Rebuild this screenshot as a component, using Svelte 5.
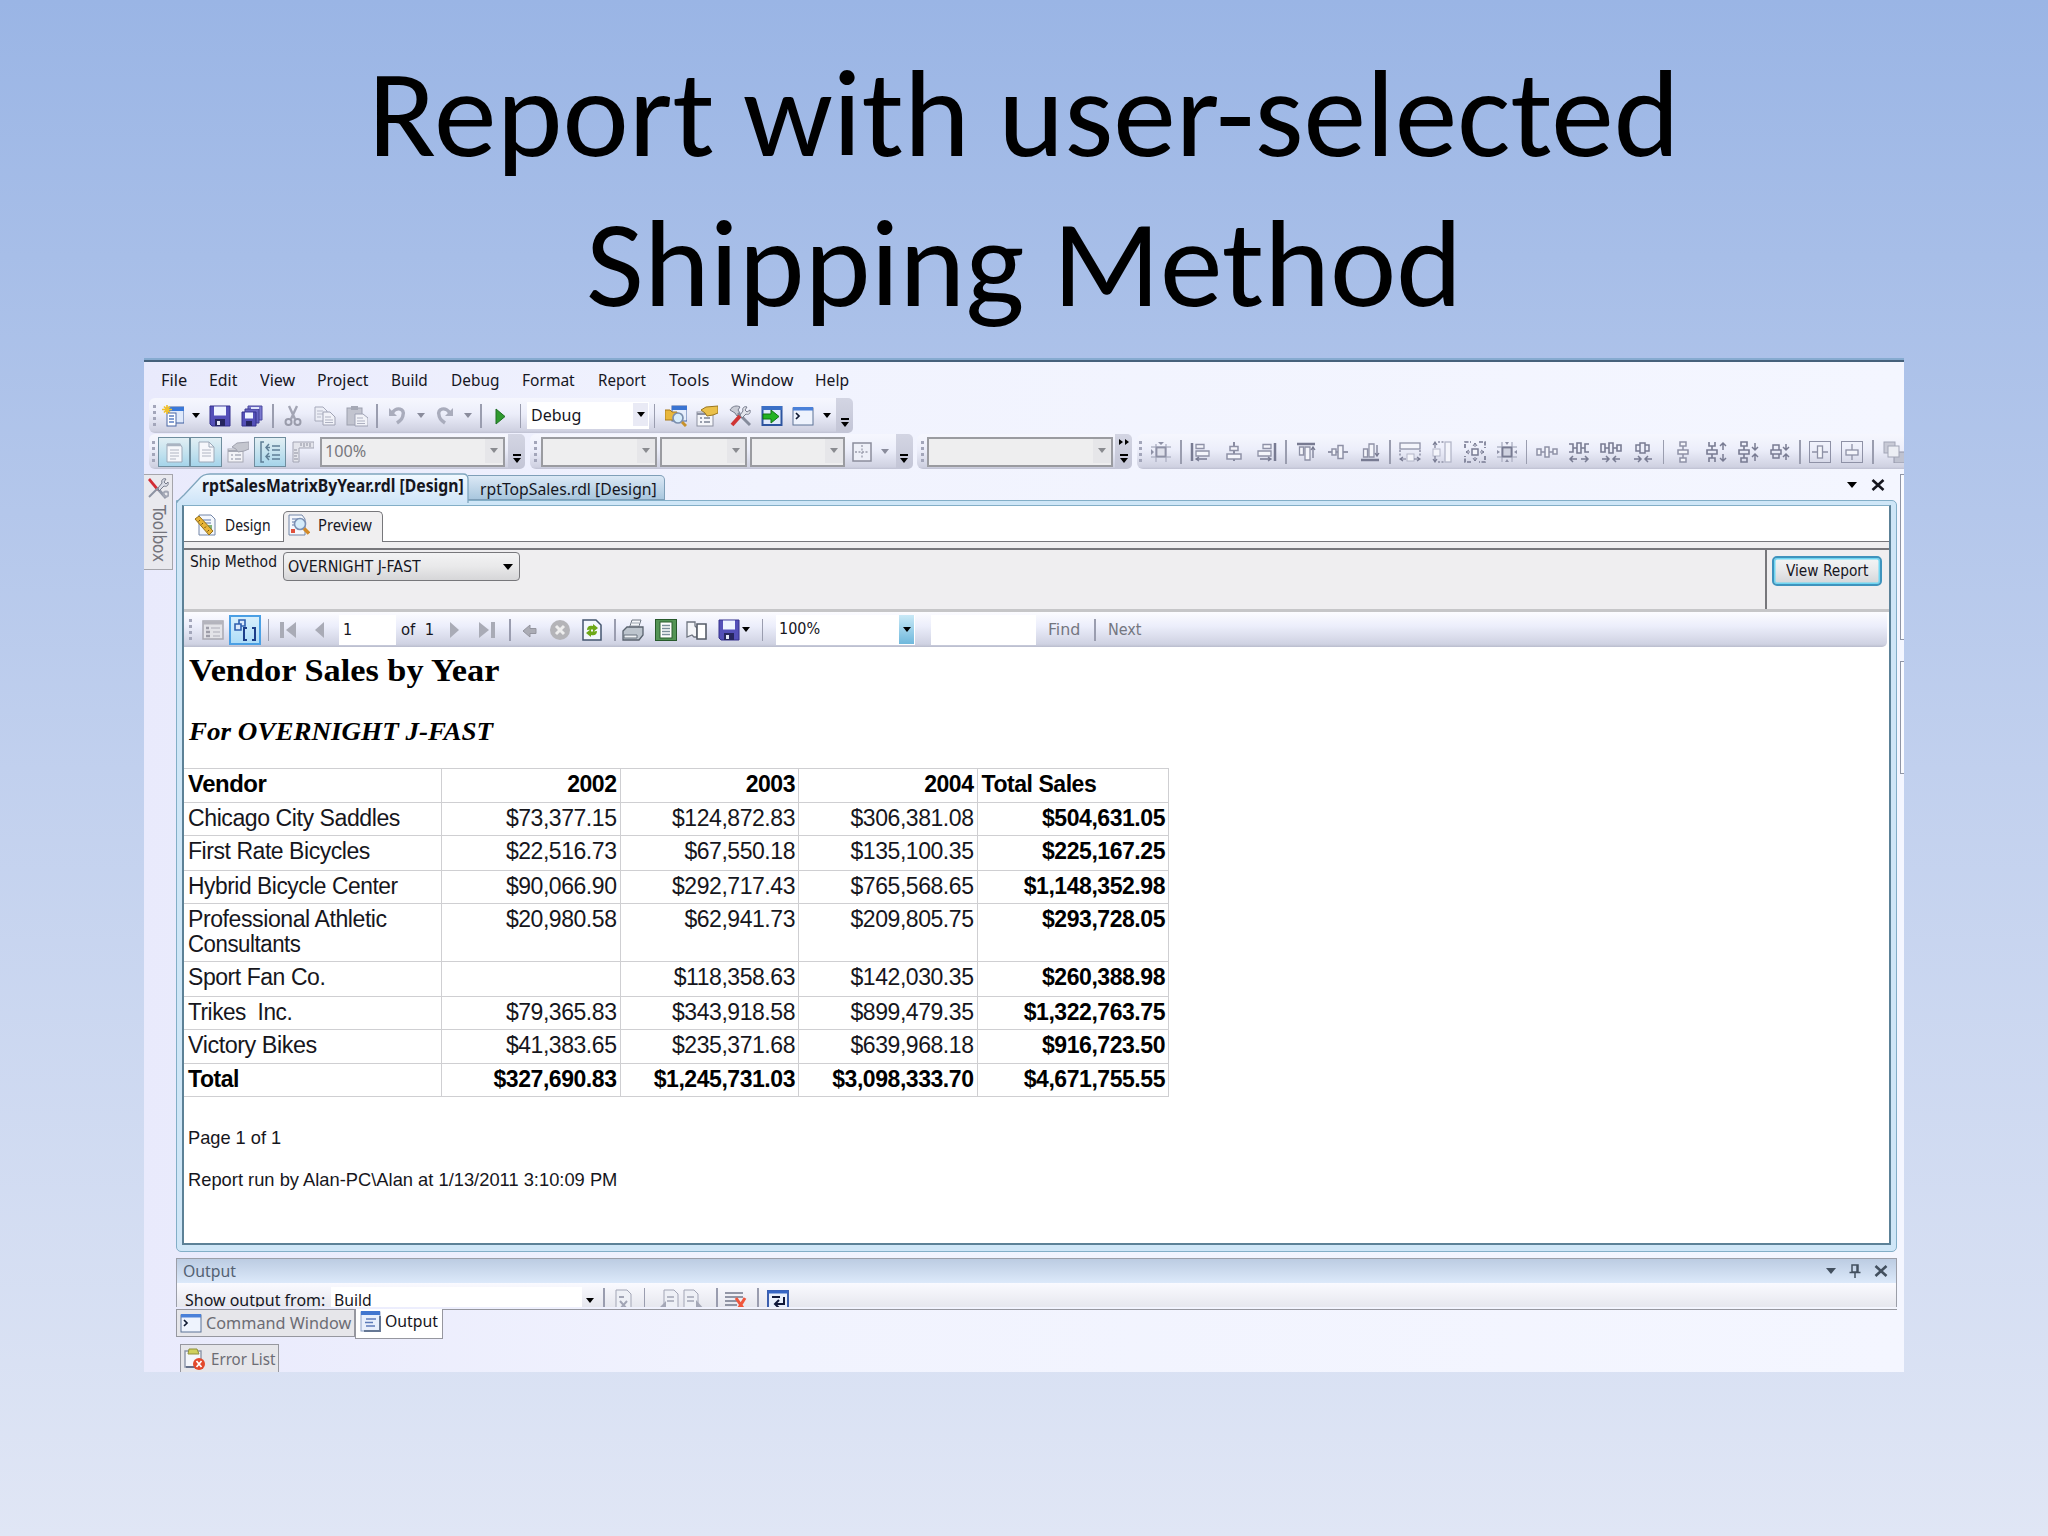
<script lang="ts">
  type Item = { kind: string; w: number; name?: string; text?: string; tw?: number; tone?: string };

  const g = '#8e91a6';
  const l = '#b3b6c8';

  const icons: Record<string, string> = {
    project: `<rect x="7" y="2" width="15" height="16" fill="#dfe9fb" stroke="#3f5f9f"/><rect x="7" y="2" width="15" height="4" fill="#3a78d8"/><rect x="5" y="8" width="9" height="13" fill="#fff" stroke="#4a66a4"/><path d="M7 11h5M7 14h5M7 17h5" stroke="#5b7fc4" stroke-width="1.4"/><path d="M5 0v9M0 4.5h10M2 1.5l6 6M8 1.5l-6 6" stroke="#f0c02c" stroke-width="1.7"/>`,
    save: `<path d="M1 1h20v20H3l-2-2z" fill="#5450b8" stroke="#34318c"/><rect x="5" y="1.5" width="12" height="9" fill="#eef3ff"/><rect x="6" y="14" width="10" height="7" fill="#26265e"/><rect x="8" y="16" width="3" height="4" fill="#e4e8f8"/>`,
    saveAll: `<path d="M7 1h14v14H7z" fill="#7a78cf" stroke="#4b489f"/><path d="M4 4h14v14H4z" fill="#6562c2" stroke="#413e94"/><path d="M1 7h14v14H1z" fill="#5450b8" stroke="#34318c"/><rect x="4" y="7.5" width="8" height="6" fill="#eef3ff"/><rect x="5" y="16" width="6" height="5" fill="#26265e"/><rect x="10" y="2" width="8" height="2" fill="#dfe3fb"/>`,
    cut: `<path d="M7 1l6 13M15 1l-6 13" stroke="#a3a5b4" stroke-width="2.4" fill="none"/><circle cx="6.5" cy="17" r="3" stroke="#9a9cab" stroke-width="2" fill="none"/><circle cx="15.5" cy="17" r="3" stroke="#9a9cab" stroke-width="2" fill="none"/>`,
    copy: `<path d="M1 2h8l4 4v10H1z" fill="#eceef6" stroke="#a6a9ba"/><path d="M3 6h6M3 9h6M3 12h4" stroke="#b6b9c8"/><path d="M9 7h7l5 5v8H9z" fill="#f1f2f8" stroke="#9fa2b4"/><path d="M11 12h6M11 15h8M11 17.5h8" stroke="#aeb1c1"/>`,
    paste: `<rect x="1" y="3" width="15" height="17" fill="#c2c4cf" stroke="#9c9fae"/><rect x="5" y="1" width="7" height="4" fill="#a5a8b5"/><path d="M9 9h8l5 4v8H9z" fill="#f1f2f8" stroke="#9fa2b4"/><path d="M11 13h6M11 16h8M11 18.5h8" stroke="#aeb1c1"/>`,
    undo: `<path d="M3 3v8h8z" fill="#a9acbc"/><path d="M6 8c5-7 13-4 11 2 0 4-3 6-6 8" fill="none" stroke="#a9acbc" stroke-width="3.4"/>`,
    redo: `<path d="M19 3v8h-8z" fill="#a9acbc"/><path d="M16 8C11 1 3 4 5 10c0 4 3 6 6 8" fill="none" stroke="#a9acbc" stroke-width="3.4"/>`,
    play: `<path d="M7 4l9 7.5L7 19z" fill="#2f9a2f" stroke="#1d6f22"/>`,
    explorer: `<rect x="7" y="1" width="15" height="15" fill="#e6eefc" stroke="#44639f"/><rect x="7" y="1" width="15" height="4" fill="#3a74d2"/><path d="M0 5h5l2 2h5v8H0z" fill="#e8b73c" stroke="#a97a1a"/><circle cx="13" cy="13" r="5" fill="#d6ecfb" stroke="#7b8fae" stroke-width="1.7"/><path d="M17 17l4 4" stroke="#c7912a" stroke-width="3"/>`,
    props: `<rect x="1" y="7" width="16" height="14" fill="#f5f6fa" stroke="#8c90a0"/><path d="M1 9h16" stroke="#8c90a0" stroke-width="2"/><path d="M4 13h2M8 13h6M4 17h2M8 17h6" stroke="#7b8294" stroke-width="1.6"/><path d="M5 5l5-3 12-1v7l-5 2-6 1-2-3z" fill="#eac04a" stroke="#9a761e"/>`,
    propsGray: `<rect x="1" y="8" width="15" height="13" fill="#f2f2f6" stroke="#a6a8b4"/><path d="M1 10h15" stroke="#a6a8b4" stroke-width="2"/><path d="M4 14h2M8 14h6M4 18h2M8 18h6" stroke="#abadba" stroke-width="1.5"/><path d="M5 6l5-4 12-1v7l-5 2-6 1-2-3z" fill="#c4c6cf" stroke="#a0a2af"/>`,
    tools: `<path d="M1 5c2-4 7-5 10-3l-2 3 2 3-3 3-2-3z" fill="#c9ccd6" stroke="#777c8c"/><path d="M9 8l12 12" stroke="#858b9b" stroke-width="3"/><path d="M11 11l-8 9" stroke="#cf3434" stroke-width="3.8"/><path d="M11 10l3-4c-1-3 1-5 4-4l-2 3 2 2 3-2c1 4-2 5-4 4l-4 4z" fill="#e3e5ec" stroke="#777c8c"/>`,
    toolsBox: `<path d="M1 3l2-2 9 11-2 2z" fill="#d22c34"/><path d="M11 12l8 9" stroke="#9298a8" stroke-width="3"/><path d="M11 11l-9 9" stroke="#8d93a2" stroke-width="2"/><path d="M11 11l4-5c-1-3 1-5 4-4l-2 3 2 2 2-2c1 4-2 5-4 4l-5 5z" fill="#d9dce6" stroke="#777c8c"/><circle cx="19" cy="17" r="2.5" fill="none" stroke="#a4a8b6" stroke-width="2"/>`,
    start: `<rect x="1.5" y="2" width="19" height="18" fill="#dfeafc" stroke="#2d549f" stroke-width="2"/><rect x="1" y="1" width="20" height="4" fill="#3a6fc6"/><path d="M2 9h8V5l8 6.5L10 18v-4H2z" fill="#22b322" stroke="#117215"/>`,
    command: `<rect x="1" y="3" width="20" height="17" fill="#eef3fd" stroke="#5c7396"/><rect x="1" y="2" width="20" height="3.5" fill="#4a80d8"/><path d="M4 8l3 3-3 3" fill="none" stroke="#101a33" stroke-width="1.7"/>`,
    page: `<path d="M4 3h13l2 3v15H4z" fill="#f6f7fb" stroke="#9da9b8"/><path d="M4 4h14" stroke="#aab4c2" stroke-width="2.5"/><path d="M7 9h9M7 12h9M7 15h9M7 18h6" stroke="#b0b5c2"/>`,
    page2: `<path d="M4 1h10l5 5v15H4z" fill="#f6f7fb" stroke="#9da9b8"/><path d="M14 1v5h5" fill="none" stroke="#9da9b8"/><path d="M7 9h9M7 12h9M7 15h9" stroke="#b0b5c2"/>`,
    group: `<path d="M5 1H2v20h3M10 3L7 6.500l3 3.500M10 12l-3 3.500L10 19" fill="none" stroke="#5f7f96" stroke-width="1.5"/><path d="M7 6.5h4M13 5h8M13 9h8M7 15.5h4M13 14h8M13 18h8" stroke="#5f7f96" stroke-width="1.5"/>`,
    ruler: `<path d="M1 1h21v6H7v14H1z" fill="#e4e5ec" stroke="#a3a5b4"/><path d="M9 2v3M12 2v4M15 2v3M18 2v4M2 9h3M2 12h4M2 15h3M2 18h4" stroke="#8d8f9e"/>`,
    borders: `<rect x="2" y="2" width="18" height="18" fill="#eef0f8" stroke="#8b8d9c" stroke-width="1.5"/><path d="M11 4v14M4 11h14" stroke="#9a9cab" stroke-width="1.3" stroke-dasharray="2 1.5"/>`,
    snap: `<path d="M6 3v18M16 3v18M1 6h20M1 16h20" stroke="${l}" stroke-width="1.5"/><rect x="6.5" y="6.5" width="9" height="9" fill="#dfe1ec" stroke="${g}" stroke-width="1.8"/><path d="M8 1h6l-3 3zM1 8v6l3-3z" fill="${g}"/>`,
    alignL: `<path d="M2 2v18" stroke="#787b92" stroke-width="2.5"/><path d="M6 3.5h8v4H6zM6 10h13v5H6z" fill="#f4f5fb" stroke="${g}" stroke-width="1.3"/><path d="M6 18h11M9 16l-3 2 3 2" stroke="#787b92" stroke-width="1.3" fill="none"/>`,
    alignC: `<path d="M11 1v19" stroke="#787b92" stroke-width="1.7"/><path d="M7 5.5h8v4H7zM4 13h14v5H4z" fill="#f4f5fb" stroke="${g}" stroke-width="1.5"/>`,
    alignR: `<path d="M20 2v18" stroke="#787b92" stroke-width="2.5"/><path d="M8 3.5h8v4H8zM3 10h13v5H3z" fill="#f4f5fb" stroke="${g}" stroke-width="1.3"/><path d="M5 18h11M13 16l3 2-3 2" stroke="#787b92" stroke-width="1.3" fill="none"/>`,
    alignT: `<path d="M2 3h18" stroke="#787b92" stroke-width="2.5"/><path d="M4.5 6v8h4V6zM10 6v13h5V6z" fill="#f4f5fb" stroke="${g}" stroke-width="1.3"/><path d="M18 17V6M16 9l2-3 2 3" stroke="#787b92" stroke-width="1.3" fill="none"/>`,
    alignM: `<path d="M1 11h20" stroke="#787b92" stroke-width="1.7"/><path d="M5 8h4v6H5zM11 4.5h5v13h-5z" fill="#f4f5fb" stroke="${g}" stroke-width="1.5"/>`,
    alignB: `<path d="M2 19h18" stroke="#787b92" stroke-width="2.5"/><path d="M4.5 8v8h4V8zM10 3v13h5V3z" fill="#f4f5fb" stroke="${g}" stroke-width="1.3"/><path d="M18 4v11M16 12l2 3 2-3" stroke="#787b92" stroke-width="1.3" fill="none"/>`,
    sameW: `<rect x="1" y="2" width="20" height="6" fill="#f4f5fb" stroke="${g}" stroke-width="1.3"/><path d="M1 9v6M21 9v6" stroke="${g}" stroke-dasharray="2 1.5" stroke-width="1.5"/><rect x="8" y="13" width="7" height="7" fill="#f4f5fb" stroke="${l}"/><path d="M1 18h6M4 16l-3 2 3 2M15 18h6M18 16l3 2-3 2" stroke="#787b92" stroke-width="1.2" fill="none"/>`,
    sameH: `<rect x="14" y="1" width="6" height="20" fill="#f4f5fb" stroke="${l}" stroke-width="1.3"/><path d="M7 1h6M7 21h6" stroke="${g}" stroke-dasharray="2 1.5" stroke-width="1.5"/><rect x="2" y="8" width="7" height="7" fill="#f4f5fb" stroke="${l}"/><path d="M4 1v6M2 4l2-3 2 3M4 15v6M2 18l2 3 2-3" stroke="#787b92" stroke-width="1.2" fill="none"/>`,
    sameWH: `<path d="M1 7V1h6M15 1h6v6M21 15v6h-6M7 21H1v-6" stroke="#787b92" stroke-width="1.7" fill="none" stroke-dasharray="4 1.5"/><rect x="8" y="8" width="6" height="6" fill="#f4f5fb" stroke="#787b92" stroke-width="1.5"/><path d="M11 2v4M9 5l2-3 2 3M11 16v4M9 17l2 3 2-3M2 11h4M5 9l-3 2 3 2M16 11h4M17 9l3 2-3 2" stroke="#787b92" fill="none"/>`,
    grid: `<path d="M6 1v20M16 1v20M1 6h20M1 16h20" stroke="${l}" stroke-width="1.5"/><rect x="6.5" y="6.5" width="9" height="9" fill="#cfd2e0" stroke="#787b92" stroke-width="1.8"/><path d="M9 1h4l-2 3zM9 21h4l-2-3zM1 9v4l3-2zM21 9v4l-3-2z" fill="${g}"/>`,
    hEq: `<path d="M1 8h4v6H1zM9 6h4v10H9zM17 8h4v5h-4zM5 11h4M13 11h4" fill="#f4f5fb" stroke="${g}" stroke-width="1.5"/>`,
    hInc: `<path d="M1 3h4v8H1M21 3h-4v8h4M9 2h4v10H9zM5 7h4M13 7h4" fill="none" stroke="#787b92" stroke-width="1.6"/><path d="M2 18h7M5 15l-3 3 3 3M13 18h7M17 15l3 3-3 3" fill="none" stroke="#787b92" stroke-width="1.5"/>`,
    hDec: `<path d="M1 3h4v8H1zM9 2h4v10H9zM17 4h4v6h-4zM5 7h4M13 7h4" fill="none" stroke="#787b92" stroke-width="1.6"/><path d="M2 18h7M6 15l3 3-3 3M13 18h7M16 15l-3 3 3 3" fill="none" stroke="#787b92" stroke-width="1.5"/>`,
    hRem: `<path d="M4 4h4v6H4zM8 2h5v10H8zM13 4h4v6h-4z" fill="none" stroke="#787b92" stroke-width="1.5"/><path d="M2 18h7M6 15l3 3-3 3M13 18h7M16 15l-3 3 3 3" fill="none" stroke="#787b92" stroke-width="1.5"/>`,
    vEq: `<path d="M8 1h6v4H8zM6 9h10v4H6zM8 17h6v4H8zM11 5v4M11 13v4" fill="#f4f5fb" stroke="${g}" stroke-width="1.5"/>`,
    vInc: `<path d="M4 1v4h6V1M4 21v-4h6v4M2 9h10v4H2zM7 5v4M7 13v4" fill="none" stroke="#787b92" stroke-width="1.6"/><path d="M18 2v7M15 5l3-3 3 3M18 13v7M15 17l3 3 3-3" fill="none" stroke="#787b92" stroke-width="1.5"/>`,
    vDec: `<path d="M4 1h6v4H4zM2 9h10v4H2zM4 17h6v4H4zM7 5v4M7 13v4" fill="none" stroke="#787b92" stroke-width="1.6"/><path d="M18 2v7M15 6l3 3 3-3M18 13v7M15 16l3-3 3 3" fill="none" stroke="#787b92" stroke-width="1.5"/>`,
    vRem: `<path d="M4 4h6v5H4zM2 9h10v4H2zM4 13h6v4H4z" fill="none" stroke="#787b92" stroke-width="1.5"/><path d="M17 3v6M14 6l3 3 3-3M17 13v6M14 16l3-3 3 3" fill="none" stroke="#787b92" stroke-width="1.5"/>`,
    cenH: `<rect x="0.5" y="0.5" width="21" height="21" fill="none" stroke="${g}"/><path d="M3 11h16" stroke="${g}" stroke-width="1.3"/><rect x="8.5" y="5" width="5" height="12" fill="#f4f5fb" stroke="${g}" stroke-width="1.3"/>`,
    cenV: `<rect x="0.5" y="0.5" width="21" height="21" fill="none" stroke="${g}"/><path d="M11 3v16" stroke="${g}" stroke-width="1.3"/><rect x="5" y="9" width="12" height="5" fill="#f4f5fb" stroke="${g}" stroke-width="1.3"/>`,
    front: `<rect x="1" y="1" width="11" height="11" fill="#c8cad6" stroke="#a2a5b6"/><rect x="11" y="11" width="11" height="11" fill="#bfc2d0" stroke="#9396aa"/><rect x="5" y="5" width="11" height="11" fill="#eceef4" stroke="#a2a5b6"/>`,
    design: `<path d="M5 1h12l4 4v16H5z" fill="#f4f7fc" stroke="#7386a8"/><path d="M9 6h8M9 9h8" stroke="#90a3c4" stroke-width="1.5"/><rect x="14" y="11" width="4" height="5" fill="#7fb27c"/><path d="M1 5l4-3 14 15-4 4z" fill="#e8b438" stroke="#96701a"/><path d="M6 6l-1.5 1.5M9 9l-1.5 1.5M12 12.5L10.5 14M15 16l-1.5 1.5" stroke="#6e500d"/>`,
    preview: `<path d="M1 1h13l3 4v16H1z" fill="#f4f7fc" stroke="#7386a8"/><path d="M4 5h9M4 8h4M4 11h3" stroke="#90a3c4" stroke-width="1.5"/><rect x="3" y="15" width="4" height="4" fill="#e0503c"/><circle cx="12" cy="10" r="5.5" fill="#d5ecfa" stroke="#7b90b4" stroke-width="1.6"/><path d="M16 14.5l5 5" stroke="#d28a28" stroke-width="3.5"/>`,
    map: `<rect x="1" y="2" width="20" height="18" fill="#e3e3e8" stroke="#a9a9b2" stroke-width="1.5"/><path d="M1 4h20" stroke="#b4b4bd" stroke-width="3"/><path d="M4 9h3M4 13h4M4 17h4" stroke="#9d9da8" stroke-width="2.5"/><path d="M9 9h9M11 13h7M11 17h7" stroke="#c0c0c8" stroke-width="1.5"/>`,
    params: `<path d="M5 1h6v6H5z" fill="#dbe9fb" stroke="#2f5fae" stroke-width="1.6"/><path d="M1 5h6v6H1z" fill="#dbe9fb" stroke="#2f5fae" stroke-width="1.6"/><path d="M13 9h-3v12h3M18 9h3v12h-3" fill="none" stroke="#1c3f8a" stroke-width="2"/>`,
    first: `<path d="M4 3v16" stroke="#a9abb6" stroke-width="4"/><path d="M18 3L8 11l10 8z" fill="#a9abb6"/>`,
    prev: `<path d="M15 3L6 11l9 8z" fill="#a9abb6"/>`,
    next: `<path d="M7 3l9 8-9 8z" fill="#a9abb6"/>`,
    last: `<path d="M18 3v16" stroke="#a9abb6" stroke-width="4"/><path d="M4 3l10 8-10 8z" fill="#a9abb6"/>`,
    back: `<path d="M5 12l7-6v3.5h6v5h-6V18z" fill="#abacb5" stroke="#94959f"/>`,
    stop: `<circle cx="11" cy="11" r="10" fill="#b4b4b8"/><path d="M7 7l8 8M15 7l-8 8" stroke="#eee" stroke-width="3"/>`,
    refresh: `<path d="M2 1h13l5 5v15H2z" fill="#f3f7fd" stroke="#44566f" stroke-width="1.5"/><path d="M6 11c0-4 3-5 6-4V5l5 4-5 4v-2.500c-2 0-3 0-6 .5zM16 12c0 4-3 5-6 4v2l-5-4 5-4v2.500c2 0 3 0 6-.5z" fill="#6da817"/>`,
    print: `<path d="M7 10L10 1h9l-3 9z" fill="#f4f6f9" stroke="#6e7783"/><path d="M10 4h7M9 7h7" stroke="#9ca5b0"/><path d="M1 12l4-4h16v8l-4 5H1z" fill="#bcc4cd" stroke="#59626e" stroke-width="1.3"/><path d="M2 16h13v3H2z" fill="#eef1f4" stroke="#69727e"/>`,
    layout: `<rect x="0.5" y="0.5" width="21" height="21" fill="#539455" stroke="#27592b"/><rect x="5" y="3" width="12" height="16" fill="#fff" stroke="#2c5f31"/><path d="M7 6.5h8M7 9.5h8M7 12.5h8M7 15.5h8" stroke="#7b8f9b" stroke-width="1.4"/>`,
    setup: `<path d="M1 3h8v4l2 2v9H8l-2-2-5 2z" fill="#f4f5f9" stroke="#6e7480" stroke-width="1.3"/><path d="M11 5h9v15h-9z" fill="#fff" stroke="#565c68" stroke-width="1.6"/>`,
    outFind: `<path d="M3 1h11l4 4v17H3z" fill="#eef0f6" stroke="#a2a5b5"/><path d="M6 8h5M7 12l7 8M14 12l-7 8" stroke="#a2a5b5" stroke-width="2"/>`,
    outPrev: `<path d="M7 1h10l4 4v14H7z" fill="#eef0f6" stroke="#a2a5b5"/><path d="M10 8h7M10 12h7" stroke="#a2a5b5" stroke-width="1.5"/><path d="M0 21l9-9v9z" fill="#a5a8b7"/>`,
    outNext: `<path d="M1 1h10l4 4v14H1z" fill="#eef0f6" stroke="#a2a5b5"/><path d="M4 8h7M4 12h7" stroke="#a2a5b5" stroke-width="1.5"/><path d="M22 21l-9-10v10z" fill="#a5a8b7"/>`,
    outClear: `<path d="M0 4h18M0 8h18M0 12h14M0 16h12M0 20h12" stroke="#73788a" stroke-width="1.7"/><path d="M11 9l9 13M20 9l-8 13" stroke="#f0563c" stroke-width="3"/>`,
    wrap: `<rect x="1" y="2" width="20" height="21" fill="#e8effc" stroke="#3c5fae" stroke-width="2"/><path d="M1 3h20" stroke="#3565c4" stroke-width="3"/><path d="M5 8h8M17 8v7H9M12 11l-4 4 4 4" fill="none" stroke="#10183a" stroke-width="2"/>`,
    output: `<rect x="1" y="2" width="19" height="19" fill="#e8effc" stroke="#8ba0c6"/><rect x="1" y="1" width="19" height="4" fill="#4176cf"/><path d="M6 9h10M5 12.5h8M6 16h9" stroke="#5c7bb9" stroke-width="1.7"/><path d="M20 6v15H4" fill="none" stroke="#657794" stroke-width="2"/>`,
    error: `<path d="M1 3h16v16H1z" fill="#f4f6fb" stroke="#8c95a8" stroke-width="1.4"/><path d="M5 1h8l2 5H4z" fill="#d0d05c" stroke="#8f913c"/><path d="M2 19h9" stroke="#66718a" stroke-width="2"/><circle cx="15" cy="16" r="6" fill="#e2492c"/><path d="M12.5 13l5 6M17.5 13l-5 6" stroke="#fff" stroke-width="1.7"/>`
  };

  const menu = [
    ['File', 26, 22],
    ['Edit', 28, 23],
    ['View', 35, 22],
    ['Project', 52, 22],
    ['Build', 37, 23],
    ['Debug', 48, 23],
    ['Format', 53, 23],
    ['Report', 48, 23],
    ['Tools', 40, 22],
    ['Window', 62, 22],
    ['Help', 34, 0]
  ] as [string, number, number][];

  const ic = (name: string, w: number): Item => ({ kind: 'glyph', name, w });
  const pressed = (name: string, w: number, tone = ''): Item => ({ kind: 'pressed', name, w, tone });
  const sep = (w: number): Item => ({ kind: 'sep', w });
  const caret = (w: number, tone = ''): Item => ({ kind: 'caret', w, tone });
  const gap = (w: number): Item => ({ kind: 'gap', w });
  const grip = (w: number): Item => ({ kind: 'grip', w });
  const label = (text: string, tw: number, w: number, tone = ''): Item => ({ kind: 'label', text, tw, w, tone });
  const combo = (w: number, text = '', tw = 0, tone = ''): Item => ({ kind: 'combo', w, text, tw, tone });

  const standardBar: Item[] = [
    grip(10), ic('project', 28), caret(18), ic('save', 30), ic('saveAll', 34), sep(8),
    ic('cut', 31), ic('copy', 33), ic('paste', 32), sep(8),
    ic('undo', 32), caret(16, 'dim'), ic('redo', 31), caret(16, 'dim'), sep(10),
    ic('play', 28), sep(13), combo(122, 'Debug', 50, 'light'), sep(11),
    ic('explorer', 31), ic('props', 32), ic('tools', 33), ic('start', 32), ic('command', 30), caret(18)
  ];

  const layoutBars: { items: Item[]; more: string }[] = [
    {
      items: [grip(9), pressed('page', 32), pressed('page2', 32), ic('propsGray', 32), pressed('group', 32), ic('ruler', 34), combo(185, '100%', 41), gap(3)],
      more: 'one'
    },
    {
      items: [grip(11), combo(116), gap(3), combo(87.5), gap(3), combo(94.5), ic('borders', 34), caret(12, 'dim'), gap(5)],
      more: 'one'
    },
    { items: [grip(10), combo(186), gap(2)], more: 'two' }
  ];

  const s = 32.3;
  const alignBar: Item[] = [
    grip(8), ic('snap', s), sep(8.5),
    ic('alignL', s), ic('alignC', s), ic('alignR', s), sep(7.2),
    ic('alignT', s), ic('alignM', s), ic('alignB', s), sep(7.5),
    ic('sameW', s), ic('sameH', s), ic('sameWH', s), ic('grid', s), sep(7.5),
    ic('hEq', s), ic('hInc', s), ic('hDec', s), ic('hRem', s), sep(7.5),
    ic('vEq', s), ic('vInc', s), ic('vDec', s), ic('vRem', s), sep(7.5),
    ic('cenH', s), ic('cenV', s), sep(9), ic('front', s)
  ];

  const reportBar: Item[] = [
    grip(12), ic('map', 33), pressed('params', 32, 'bright'), sep(15),
    ic('first', 25), ic('prev', 38), { kind: 'field', w: 57, text: '1', tw: 9 },
    label('of  1', 33, 43), ic('next', 29), ic('last', 36), sep(12),
    ic('back', 25), ic('stop', 38), ic('refresh', 26), sep(20),
    ic('print', 16), gap(8), ic('layout', 33), ic('setup', 30), ic('save', 33), caret(1), gap(3), sep(27),
    combo(139, '100%', 41, 'zoom'), gap(16), { kind: 'field', w: 105 },
    gap(6), label('Find', 32, 43, 'dim'), sep(20), label('Next', 34, 40, 'dim')
  ];

  const outputBar: Item[] = [
    gap(1), label('Show output from:', 140, 153), combo(268, 'Build', 38, 'flat'), sep(10),
    ic('outFind', 30), sep(11), ic('outPrev', 36), ic('outNext', 16), sep(30),
    ic('outClear', 8), sep(36), ic('wrap', 3)
  ];

  const years = ['2002', '2003', '2004'];
  const rows = [
    { name: ['Chicago City Saddles'], nw: [212], h: 33.5, v: ['$73,377.15', '$124,872.83', '$306,381.08'], total: '$504,631.05' },
    { name: ['First Rate Bicycles'], nw: [182], h: 35, v: ['$22,516.73', '$67,550.18', '$135,100.35'], total: '$225,167.25' },
    { name: ['Hybrid Bicycle Center'], nw: [210], h: 33.4, v: ['$90,066.90', '$292,717.43', '$765,568.65'], total: '$1,148,352.98' },
    { name: ['Professional Athletic', 'Consultants'], nw: [199, 113], h: 57.3, v: ['$20,980.58', '$62,941.73', '$209,805.75'], total: '$293,728.05' },
    { name: ['Sport Fan Co.'], nw: [137], h: 35, v: ['', '$118,358.63', '$142,030.35'], total: '$260,388.98' },
    { name: ['Trikes  Inc.'], nw: [104], h: 33.4, v: ['$79,365.83', '$343,918.58', '$899,479.35'], total: '$1,322,763.75' },
    { name: ['Victory Bikes'], nw: [129], h: 33.6, v: ['$41,383.65', '$235,371.68', '$639,968.18'], total: '$916,723.50' }
  ];
  const totals = ['$327,690.83', '$1,245,731.03', '$3,098,333.70', '$4,671,755.55'];

  // squeeze or stretch a run of text to an exact advance width
  function fit(node: HTMLElement, width: number) {
    node.style.transform = `scaleX(${width / node.offsetWidth})`;
  }
</script>

{#snippet icon(name: string)}
  <svg class="icon" viewBox="0 0 22 22" fill="none">{@html icons[name]}</svg>
{/snippet}

{#snippet fitted(text: string, width: number)}
  <span class="fit" style={`width: ${width}px`}><span class="fit-text" use:fit={width}>{text}</span></span>
{/snippet}

{#snippet closeMark()}
  <svg class="close" viewBox="0 0 14 12"><path d="M1.5 1l11 10M12.5 1l-11 10" stroke="currentColor" stroke-width="2.6" /></svg>
{/snippet}

{#snippet bar(items: Item[])}
  {#each items as item}
    <div class={`item ${item.kind} ${item.tone ?? ''}`} style={`width: ${item.w}px`}>
      {#if item.name}
        {@render icon(item.name)}
      {:else if item.kind === 'grip'}
        <i></i><i></i><i></i><i></i>
      {:else if item.kind === 'sep'}
        <i></i>
      {:else if item.kind === 'caret'}
        <i class="arrow"></i>
      {:else if item.kind === 'combo'}
        {#if item.text}{@render fitted(item.text, item.tw ?? 0)}{/if}
        <span class="drop"><i class="arrow"></i></span>
      {:else if item.text}
        {@render fitted(item.text, item.tw ?? 0)}
      {/if}
    </div>
  {/each}
{/snippet}

{#snippet overflow(kind: string)}
  <div class={`more ${kind}`}>
    {#if kind === 'two'}
      <svg class="chevrons" viewBox="0 0 12 6"><path d="M1 0l4 3-4 3zM7 0l4 3-4 3z" fill="#000" /></svg>
    {/if}
    <b></b><i class="arrow"></i>
  </div>
{/snippet}

<main class="slide">
  <h1 class="title">
    {@render fitted('Report with user-selected', 1312)}
    {@render fitted('Shipping Method', 876)}
  </h1>

  <section class="window">
    <nav class="menu">
      {#each menu as [text, width, space]}
        <span class="menu-item" style={`margin-right: ${space}px`}>{@render fitted(text, width)}</span>
      {/each}
    </nav>

    <div class="toolbar-row">
      <div class="toolbar">{@render bar(standardBar)}</div>
      {@render overflow('one')}
    </div>

    <div class="toolbar-row">
      {#each layoutBars as b}
        <div class="toolbar">{@render bar(b.items)}</div>
        {@render overflow(b.more)}
        <div class="between"></div>
      {/each}
      <div class="toolbar wide">{@render bar(alignBar)}</div>
    </div>

    <div class="workspace">
      <aside class="dock">
        <div class="toolbox">
          {@render icon('toolsBox')}
          <span class="vertical">Toolbox</span>
        </div>
      </aside>

      <div class="center">
        <div class="tabs">
          <div class="tab-active">
            <svg class="tab-shape" viewBox="0 0 294 30">
              <path d="M0.5 30C2 27 5 25 8 22L22 7C26 2 29 1 34 1H287Q292 1 292 6V30" fill="url(#tabfill)" stroke="#7fa5bd" stroke-width="1.3" />
              <defs><linearGradient id="tabfill" x2="0" y2="1"><stop offset="0" stop-color="#f2f9ff" /><stop offset="1" stop-color="#cfe5f8" /></linearGradient></defs>
            </svg>
            <span class="tab-title">{@render fitted('rptSalesMatrixByYear.rdl [Design]', 262)}</span>
          </div>
          <div class="tab-idle">{@render fitted('rptTopSales.rdl [Design]', 177)}</div>
          <div class="tab-controls"><i class="arrow big"></i>{@render closeMark()}</div>
        </div>

        <div class="frame">
          <div class="document">
            <div class="views">
              <div class="view-design">{@render icon('design')}{@render fitted('Design', 46)}</div>
              <div class="view-preview">{@render icon('preview')}{@render fitted('Preview', 54)}</div>
              <div class="view-rest"></div>
            </div>
            <div class="parameters">
              <div class="ship">
                {@render fitted('Ship Method', 87)}
                <div class="select">{@render fitted('OVERNIGHT J-FAST', 133)}<i class="arrow big"></i></div>
              </div>
              <div class="run"><button class="run-button">{@render fitted('View Report', 82)}</button></div>
            </div>
            <div class="report-bar">{@render bar(reportBar)}</div>
            <article class="report">
              <h2>{@render fitted('Vendor Sales by Year', 311)}</h2>
              <h3>{@render fitted('For OVERNIGHT J-FAST', 304)}</h3>
              <div class="grid">
                <div class="row head top">
                  <div class="cell">{@render fitted('Vendor', 78)}</div>
                  {#each years as year}<div class="cell num">{year}</div>{/each}
                  <div class="cell">{@render fitted('Total Sales', 115)}</div>
                </div>
                {#each rows as row}
                  <div class="row" style={`height: ${row.h}px`}>
                    <div class="cell">
                      {#each row.name as part, i}{@render fitted(part, row.nw[i])}{/each}
                    </div>
                    {#each row.v as value}<div class="cell num">{value}</div>{/each}
                    <div class="cell num strong">{row.total}</div>
                  </div>
                {/each}
                <div class="row head sum">
                  <div class="cell">{@render fitted('Total', 51)}</div>
                  {#each totals as value}<div class="cell num">{value}</div>{/each}
                </div>
              </div>
              <p class="foot">{@render fitted('Page 1 of 1', 93)}</p>
              <p class="foot">{@render fitted('Report run by Alan-PC\\Alan at 1/13/2011 3:10:09 PM', 429)}</p>
            </article>
          </div>
        </div>

        <div class="output">
          <div class="output-head">
            {@render fitted('Output', 53)}
            <div class="output-controls">
              <i class="arrow big"></i>
              <svg class="pin" viewBox="0 0 12 14"><path d="M3 1h6v7H3zM0.5 8.5h11M6 9v5M8 1v7" fill="none" stroke="#43505f" stroke-width="1.5" /></svg>
              {@render closeMark()}
            </div>
          </div>
          <div class="output-bar">{@render bar(outputBar)}</div>
        </div>
        <div class="panes">
          <div class="pane">{@render icon('command')}{@render fitted('Command Window', 145)}</div>
          <div class="pane current">{@render icon('output')}{@render fitted('Output', 53)}</div>
          <div class="pane-rest"></div>
        </div>
        <div class="errors">{@render icon('error')}{@render fitted('Error List', 64)}</div>
      </div>

      <aside class="edge"><div class="stub tall"></div><div class="stub"></div></aside>
    </div>
  </section>
</main>

<style>
  :global(body) {
    margin: 0;
  }

  * {
    box-sizing: border-box;
  }

  .slide {
    width: 2048px;
    height: 1536px;
    overflow: hidden;
    background: linear-gradient(180deg, #9ab5e5 0%, #c1d0ee 50%, #e0e6f5 100%);
    font-family: 'Noto Sans', 'Open Sans', sans-serif;
    font-size: 17px;
    line-height: 24px;
    color: #16161e;
  }

  .fit {
    display: block;
    flex: none;
    white-space: pre;
  }

  .fit-text {
    display: inline-block;
    transform-origin: 0 50%;
  }

  .title {
    display: flex;
    flex-direction: column;
    align-items: center;
    height: 360px;
    margin: 0;
    padding-top: 39px;
    font: 400 124px/150px Carlito, Lato, sans-serif;
    color: #000;
  }

  .window {
    display: flex;
    flex-direction: column;
    width: 1760px;
    height: 1012px;
    margin-left: 144px;
    overflow: hidden;
    border-top: 2px solid #46617b;
    background: linear-gradient(90deg, #e9eafc 0%, #f1f3fe 35%, #f4f6ff 100%);
    box-shadow: 0 -2px 0 #86abd0;
  }

  .menu {
    display: flex;
    height: 36px;
    padding: 6px 0 0 17px;
  }

  .toolbar-row {
    display: flex;
    height: 35px;
    padding-left: 5px;
    margin-bottom: 1px;
  }

  .toolbar {
    display: flex;
    align-items: center;
    flex: none;
    border-radius: 6px 0 0 6px;
    background: linear-gradient(180deg, #f6f7fe 0%, #eceefa 45%, #cfd1e1 94%, #bfc1d2 100%);
  }

  .toolbar.wide {
    flex: 1;
    overflow: hidden;
  }

  .between {
    width: 4.5px;
  }

  .item {
    display: flex;
    align-items: center;
    justify-content: center;
    flex: none;
  }

  .icon {
    width: 22px;
    height: 22px;
    flex: none;
  }

  .grip {
    flex-direction: column;
    gap: 3px;
  }

  .grip i {
    width: 3px;
    height: 3px;
    background: #a3a6ba;
  }

  .sep i {
    width: 1.5px;
    height: 24px;
    background: #9a9daf;
  }

  .arrow {
    width: 0;
    height: 0;
    flex: none;
    border: 4px solid transparent;
    border-top: 5px solid #000;
    border-bottom: 0;
  }

  .arrow.big {
    border-width: 6px 5.5px 0;
  }

  .dim .arrow {
    border-top-color: #8a8c9c;
  }

  .pressed {
    height: 30px;
    border: 1.5px solid #6f8d9e;
    background: linear-gradient(180deg, #e2eff4 0%, #bfe0ee 60%, #a5d4ea 100%);
  }

  .pressed.bright {
    border: 2px solid #4b9fe4;
    background: linear-gradient(180deg, #d8effc 0%, #aeddf8 100%);
  }

  .combo {
    justify-content: flex-start;
    height: 30px;
    padding: 0 0 2px 3px;
    border: 2px solid #9a9ba0;
    background: #eeeeef;
    color: #77777d;
  }

  .drop {
    display: flex;
    align-items: center;
    justify-content: center;
    width: 18px;
    height: 100%;
    margin-left: auto;
    background: #e6e6e9;
  }

  .combo .arrow {
    border-top-color: #8a8b90;
  }

  .combo.light,
  .combo.zoom,
  .combo.flat {
    border: 0;
    background: #fff;
    color: #16161e;
  }

  .combo.light {
    height: 27px;
    border: 1px solid #fff;
  }

  .light .drop {
    width: 15px;
    background: #e9eaf5;
  }

  .light .arrow,
  .zoom .arrow,
  .flat .arrow {
    border-top-color: #000;
  }

  .combo.zoom {
    height: 30px;
    padding-bottom: 1px;
    border-right: 1px solid #fff;
  }

  .zoom .drop {
    width: 15px;
    background: linear-gradient(180deg, #c9e9f7 0%, #6fb8dc 100%);
  }

  .combo.flat {
    padding: 0 0 0 3px;
    background: linear-gradient(90deg, #fff 251px, transparent 251px);
  }

  .flat .drop {
    background: none;
  }

  .more {
    display: flex;
    flex-direction: column;
    align-items: center;
    justify-content: flex-end;
    width: 17px;
    padding-bottom: 6px;
    border-radius: 0 5px 5px 0;
    background: linear-gradient(180deg, #d3d5e3 0%, #c3c5d6 100%);
  }

  .more b {
    width: 8px;
    height: 2px;
    margin-bottom: 2px;
    background: #000;
  }

  .chevrons {
    width: 12px;
    height: 6px;
    margin-bottom: 9px;
  }

  .workspace {
    display: flex;
    flex: 1;
    min-height: 0;
  }

  .dock {
    width: 32px;
    padding-top: 4px;
  }

  .toolbox {
    display: flex;
    flex-direction: column;
    align-items: center;
    width: 29px;
    height: 96px;
    padding-top: 2px;
    border: 1.5px solid #a5a5ab;
    border-left: 0;
    background: #e9e9ee;
    color: #74747c;
  }

  .vertical {
    writing-mode: vertical-rl;
    margin-top: 6px;
    padding-left: 2px;
    font: 17px/24px 'DejaVu Sans Condensed', 'DejaVu Sans', sans-serif;
  }

  .center {
    display: flex;
    flex-direction: column;
    width: 1721px;
  }

  .center > div {
    flex: none;
  }

  .tabs {
    display: flex;
    height: 30px;
    padding-top: 3px;
  }

  .tab-active {
    position: relative;
    width: 294px;
    height: 30px;
    z-index: 1;
  }

  .tab-shape {
    display: block;
    width: 294px;
    height: 30px;
  }

  .tab-title {
    position: absolute;
    left: 26px;
    top: 1px;
    font-weight: 700;
  }

  .tab-idle {
    width: 197px;
    height: 25px;
    margin: 2px 0 0 -2px;
    padding: 0 0 0 12px;
    border: 1.5px solid #7f9fb8;
    border-left: 0;
    border-radius: 0 5px 0 0;
    background: linear-gradient(180deg, #dbe8f5 0%, #a9c7de 100%);
    line-height: 25px;
  }

  .tab-controls {
    display: flex;
    align-items: center;
    gap: 14px;
    height: 24px;
    margin-left: auto;
    padding-right: 12px;
  }

  .close {
    width: 14px;
    height: 12px;
  }

  .frame {
    height: 752px;
    padding: 4px 5px 6px;
    border: 1px solid #83aec7;
    border-radius: 0 5px 5px 5px;
    background: #cfe6f7;
  }

  .document {
    display: flex;
    flex-direction: column;
    height: 100%;
    border: 2px solid #5c8197;
    border-top: 1px solid #83aec7;
    background: #fff;
  }

  .views {
    display: flex;
    height: 36px;
  }

  .view-design,
  .view-preview {
    display: flex;
    align-items: center;
  }

  .view-design {
    gap: 9px;
    width: 99px;
    padding: 3px 0 0 10px;
    border-bottom: 1.5px solid #77777b;
  }

  .view-preview {
    gap: 8px;
    width: 100px;
    margin-top: 5px;
    padding: 0 0 4px 4px;
    border: 1.5px solid #77777b;
    border-bottom: 0;
    border-radius: 5px 5px 0 0;
    background: #f0eff0;
  }

  .view-rest {
    flex: 1;
    border-bottom: 1.5px solid #77777b;
  }

  .parameters {
    display: flex;
    height: 70px;
    border-top: 6px solid #f0eff0;
    border-bottom: 3px solid #c6c6c8;
    background: #efeef0;
    font-family: 'DejaVu Sans Condensed', 'DejaVu Sans', sans-serif;
    font-size: 16px;
  }

  .ship,
  .run {
    display: flex;
    align-items: flex-start;
    border-top: 2px solid #77777b;
  }

  .ship {
    flex: 1;
    padding-left: 6px;
  }

  .select {
    display: flex;
    align-items: center;
    justify-content: space-between;
    width: 237px;
    height: 29px;
    margin: 2px 0 0 6px;
    padding: 1px 6px 0 4px;
    border: 1.5px solid #77777b;
    border-radius: 4px;
    background: linear-gradient(180deg, #f3f3f4 0%, #e9e9ea 50%, #d6d6d8 100%);
  }

  .run {
    width: 124px;
    padding: 6px 0 0 5px;
    border-left: 2px solid #77777b;
  }

  .run-button {
    display: flex;
    align-items: center;
    justify-content: center;
    width: 110px;
    height: 30px;
    padding: 0;
    border: 2px solid #3f93bd;
    border-radius: 5px;
    background: linear-gradient(180deg, #f3f5f6 0%, #e7e8ea 50%, #d3d5d8 100%);
    box-shadow: inset 0 0 0 1.5px #6fd6f2;
    color: inherit;
    font: inherit;
  }

  .report-bar {
    display: flex;
    align-items: center;
    height: 35px;
    margin-right: 2px;
    border-radius: 0 0 5px 0;
    background: linear-gradient(180deg, #fcfcff 0%, #eceefb 40%, #cfd2e2 92%, #b9bccd 100%);
    font-family: 'DejaVu Sans Condensed', 'DejaVu Sans', sans-serif;
    font-size: 16px;
  }

  .report-bar .sep i {
    height: 22px;
  }

  .field {
    justify-content: flex-start;
    height: 30px;
    padding-left: 4px;
    background: #fff;
  }

  .label.dim {
    color: #74767f;
  }

  .report {
    flex: 1;
    color: #16161c;
  }

  .report h2,
  .report h3 {
    margin: 0;
    padding-left: 5px;
    color: #000;
    font-family: 'Liberation Serif', serif;
    font-weight: 700;
  }

  .report h2 {
    height: 62px;
    padding-top: 3px;
    font-size: 32px;
    line-height: 40px;
  }

  .report h3 {
    height: 59px;
    padding-top: 8px;
    font-size: 25px;
    font-style: italic;
    line-height: 30px;
  }

  .grid {
    width: 985px;
    border-top: 1.5px solid #cfcfd2;
    font-family: 'Liberation Sans', sans-serif;
    font-size: 23px;
    letter-spacing: -0.45px;
    line-height: 25px;
  }

  .row {
    display: grid;
    grid-template-columns: 257.5px 179px 178.5px 178.5px 191.5px;
  }

  .row.top {
    height: 33.6px;
  }

  .row.sum {
    height: 33px;
  }

  .cell {
    padding: 3px 3px 0 4px;
    border-right: 1.5px solid #cfcfd2;
    border-bottom: 1.5px solid #cfcfd2;
    white-space: nowrap;
  }

  .num {
    text-align: right;
  }

  .head,
  .strong {
    color: #000;
    font-weight: 700;
  }

  .foot {
    margin: 0;
    padding: 29px 0 0 4px;
    font: 19px/24px 'Liberation Sans', sans-serif;
  }

  .foot + .foot {
    padding-top: 18px;
  }

  .output {
    height: 49px;
    margin-top: 6px;
    border: 1.5px solid #9b9ea8;
    border-bottom: 0;
  }

  .output-head {
    display: flex;
    height: 24px;
    padding-left: 6px;
    background: linear-gradient(180deg, #bccce2 0%, #dce9fa 100%);
    color: #536273;
  }

  .output-controls {
    display: flex;
    align-items: center;
    gap: 13px;
    margin-left: auto;
    padding-right: 8px;
    color: #43505f;
  }

  .output-controls .arrow {
    border-top-color: #43505f;
  }

  .pin {
    width: 12px;
    height: 14px;
  }

  .output-bar {
    display: flex;
    height: 24px;
    padding-top: 4px;
    overflow: hidden;
    background: linear-gradient(180deg, #fafaff 0%, #e6e7ee 100%);
  }

  .output-bar .item {
    height: 26px;
  }

  .panes {
    display: flex;
    align-items: flex-start;
    height: 33px;
    padding-top: 2px;
  }

  .pane,
  .errors {
    display: flex;
    align-items: center;
    border: 1.5px solid #96979f;
    background: #e6e6ea;
    color: #6c6c74;
  }

  .pane {
    gap: 4px;
    width: 179px;
    height: 28px;
    padding-left: 3px;
  }

  .pane.current {
    gap: 3px;
    width: 88px;
    height: 30px;
    padding: 0 0 6px 4px;
    border-top: 0;
    background: #fff;
    color: #16161e;
  }

  .pane-rest {
    flex: 1;
    border-top: 1.5px solid #96979f;
  }

  .errors {
    gap: 5px;
    width: 99px;
    height: 30px;
    margin: 4px 0 0 4px;
    padding-left: 3px;
  }

  .edge {
    width: 7px;
    padding: 4px 0 0 3px;
  }

  .stub {
    height: 113px;
    border: 1.5px solid #8f95a6;
    border-right: 0;
    background: #fafbff;
  }

  .tall {
    height: 166px;
    margin-bottom: 21px;
  }
</style>
